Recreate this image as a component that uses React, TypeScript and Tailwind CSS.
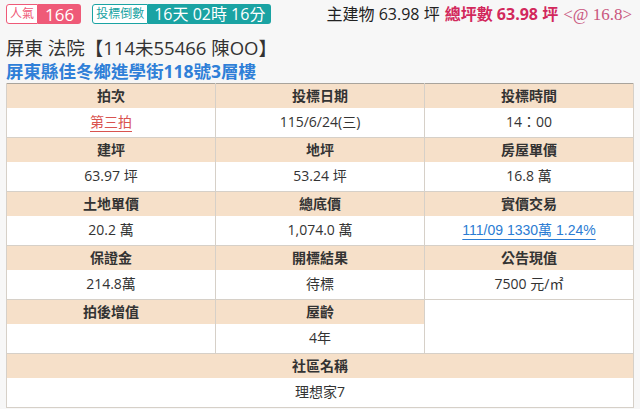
import React from "react"

const font = { fontFamily: '"Open Sans", "Noto Sans CJK TC", sans-serif' }

function Badge({ label, value, color }: { label: string; value: string; color: "pink" | "teal" }) {
  const outline = color === "pink" ? "border-[#ef5a78] text-[#ef5a78]" : "border-[#1aa3a3] text-[#1aa3a3]"
  const fill = color === "pink" ? "bg-[#ef5a78] px-[7px] text-[17px]" : "bg-[#1aa3a3] px-[6px] text-[16px]"
  return (
    <div className="flex h-[20px] items-stretch">
      <span className={`flex items-center rounded-l-[3px] border bg-white px-[3px] text-[12px] leading-none ${outline}`}>{label}</span>
      <span className={`flex items-center rounded-r-[3px] leading-none text-white ${fill}`}>{value}</span>
    </div>
  )
}

function Head({ children, colSpan }: { children?: React.ReactNode; colSpan?: number }) {
  return (
    <td colSpan={colSpan} className="h-[24px] border-x border-[#d6d0c8] bg-[#f6e0c9] p-0 text-center align-middle text-[14px] font-bold leading-none text-[#333]">
      {children}
    </td>
  )
}

function Val({ children, colSpan }: { children?: React.ReactNode; colSpan?: number }) {
  return (
    <td colSpan={colSpan} className="h-[30px] border border-t-0 border-[#d6d0c8] bg-white p-0 text-center align-middle text-[14px] leading-none text-[#333]">
      {children}
    </td>
  )
}

export default function App() {
  return (
    <div className="h-[409px] w-[640px] overflow-hidden bg-[#f7f7f7] px-[6px] pt-[4px]" style={font}>
      <div className="flex items-center">
        <Badge label="人氣" value="166" color="pink" />
        <div className="ml-[11px]">
          <Badge label="投標倒數" value="16天 02時 16分" color="teal" />
        </div>
        <div className="ml-auto flex items-center gap-[5px] pr-[2px] text-[16px] leading-none">
          <span className="text-[#222]">主建物 63.98 坪</span>
          <span className="font-bold text-[#d2285c]">總坪數 63.98 坪</span>
          <span className="text-[17px] text-[#c9567e]" style={{ fontFamily: '"Liberation Serif", serif' }}>&lt;@ 16.8&gt;</span>
        </div>
      </div>
      <div className="mt-[15px] text-[18.5px] leading-none text-[#333]">屏東 法院【114未55466 陳OO】</div>
      <div className="mt-[5px] text-[17.5px] font-bold leading-none text-[#2f7fd8]">屏東縣佳冬鄉進學街118號3層樓</div>
      <table className="mt-[3px] w-[628px] table-fixed border-collapse border border-[#a9a49c]">
        <tbody>
          <tr>
            <Head>拍次</Head>
            <Head>投標日期</Head>
            <Head>投標時間</Head>
          </tr>
          <tr>
            <Val>
              <span className="text-[#d9534f] underline underline-offset-[4px]">第三拍</span>
            </Val>
            <Val>115/6/24(三)</Val>
            <Val>14：00</Val>
          </tr>
          <tr>
            <Head>建坪</Head>
            <Head>地坪</Head>
            <Head>房屋單價</Head>
          </tr>
          <tr>
            <Val>63.97 坪</Val>
            <Val>53.24 坪</Val>
            <Val>16.8 萬</Val>
          </tr>
          <tr>
            <Head>土地單價</Head>
            <Head>總底價</Head>
            <Head>實價交易</Head>
          </tr>
          <tr>
            <Val>20.2 萬</Val>
            <Val>1,074.0 萬</Val>
            <Val>
              <span className="text-[#2b7cd3] underline underline-offset-[4px]" style={{ fontFamily: '"Liberation Sans", "Noto Sans CJK TC", sans-serif' }}>
                111/09 1330萬 1.24%
              </span>
            </Val>
          </tr>
          <tr>
            <Head>保證金</Head>
            <Head>開標結果</Head>
            <Head>公告現值</Head>
          </tr>
          <tr>
            <Val>214.8萬</Val>
            <Val>待標</Val>
            <Val>7500 元/㎡</Val>
          </tr>
          <tr>
            <Head>拍後增值</Head>
            <Head>屋齡</Head>
            <td rowSpan={2} className="border border-[#d6d0c8] bg-white p-0" />
          </tr>
          <tr>
            <Val></Val>
            <Val>4年</Val>
          </tr>
          <tr>
            <Head colSpan={3}>社區名稱</Head>
          </tr>
          <tr>
            <Val colSpan={3}>理想家7</Val>
          </tr>
        </tbody>
      </table>
    </div>
  )
}
